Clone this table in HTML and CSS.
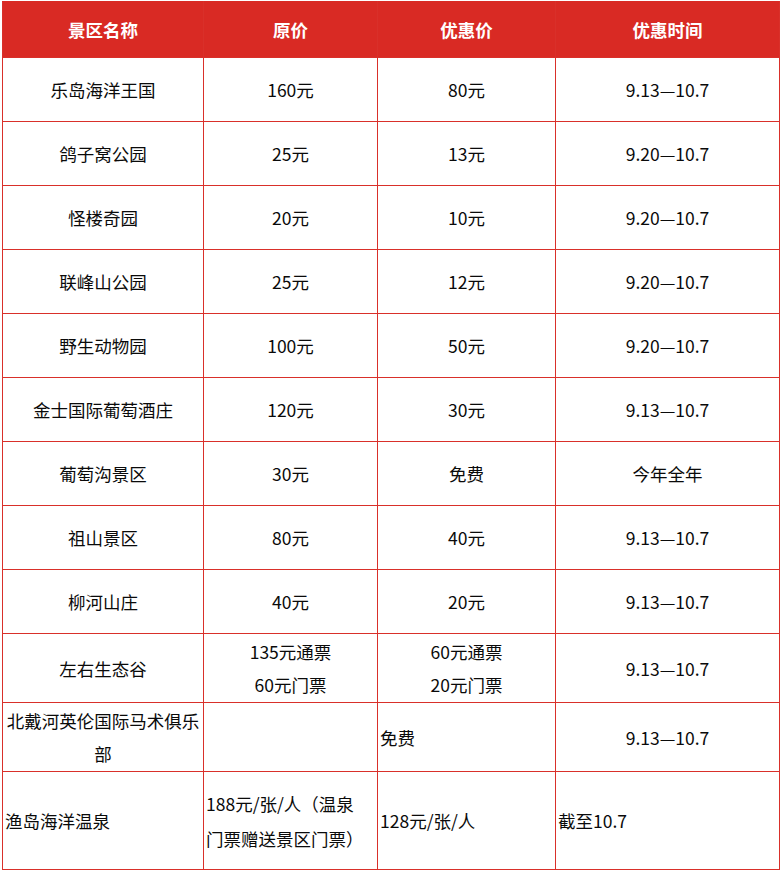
FILE: index.html
```html
<!DOCTYPE html>
<html lang="zh-CN">
<head>
<meta charset="utf-8">
<title>景区优惠</title>
<link rel="stylesheet" href="styles.css">
</head>
<body>
<table class="price-table">
  <colgroup>
    <col class="c1"><col class="c2"><col class="c3"><col class="c4">
  </colgroup>
  <thead>
    <tr class="head-row">
      <th>景区名称</th><th>原价</th><th>优惠价</th><th>优惠时间</th>
    </tr>
  </thead>
  <tbody>
    <tr class="row"><td>乐岛海洋王国</td><td>160元</td><td>80元</td><td>9.13—10.7</td></tr>
    <tr class="row"><td>鸽子窝公园</td><td>25元</td><td>13元</td><td>9.20—10.7</td></tr>
    <tr class="row"><td>怪楼奇园</td><td>20元</td><td>10元</td><td>9.20—10.7</td></tr>
    <tr class="row"><td>联峰山公园</td><td>25元</td><td>12元</td><td>9.20—10.7</td></tr>
    <tr class="row"><td>野生动物园</td><td>100元</td><td>50元</td><td>9.20—10.7</td></tr>
    <tr class="row"><td>金士国际葡萄酒庄</td><td>120元</td><td>30元</td><td>9.13—10.7</td></tr>
    <tr class="row"><td>葡萄沟景区</td><td>30元</td><td>免费</td><td>今年全年</td></tr>
    <tr class="row"><td>祖山景区</td><td>80元</td><td>40元</td><td>9.13—10.7</td></tr>
    <tr class="row"><td>柳河山庄</td><td>40元</td><td>20元</td><td>9.13—10.7</td></tr>
    <tr class="row-2"><td>左右生态谷</td><td>135元通票<br>60元门票</td><td>60元通票<br>20元门票</td><td>9.13—10.7</td></tr>
    <tr class="row-2"><td>北戴河英伦国际马术俱乐<br>部</td><td></td><td class="left">免费</td><td>9.13—10.7</td></tr>
    <tr class="row-3"><td class="left">渔岛海洋温泉</td><td class="left">188元/张/人（温泉<br>门票赠送景区门票）</td><td class="left">128元/张/人</td><td class="left">截至10.7</td></tr>
  </tbody>
</table>
</body>
</html>
```

FILE: styles.css
```css
html, body {
  margin: 0;
  padding: 0;
  background: #ffffff;
}

body {
  font-family: "Noto Sans CJK SC", "Noto Sans", sans-serif;
  color: #0a0a0a;
}

.price-table {
  margin: 1px 0 0 2px;
  width: 777px;
  table-layout: fixed;
  border-collapse: collapse;
  font-size: 17.5px;
  line-height: 33px;
}

.c1 { width: 201px; }
.c2 { width: 174px; }
.c3 { width: 178px; }
.c4 { width: 224px; }

.price-table th,
.price-table td {
  border: 1px solid #d9302a;
  padding: 1px 2px;
  text-align: center;
  vertical-align: middle;
  white-space: nowrap;
}

.price-table th {
  background: #d92a24;
  color: #ffffff;
  font-weight: 700;
  border-top-color: #d92a24;
}

.head-row { height: 56px; }
.row { height: 64px; }
.row-2 { height: 69px; }
.row-3 { height: 98px; line-height: 35px; }

.price-table td.left { text-align: left; }
```
